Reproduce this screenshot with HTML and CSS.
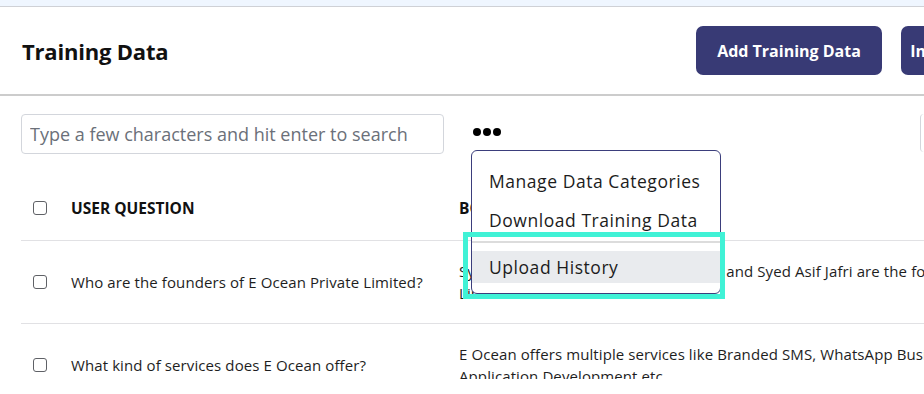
FILE: index.html
```html
<!DOCTYPE html>
<html lang="en">
<head>
  <meta charset="UTF-8" />
  <meta name="viewport" content="width=device-width, initial-scale=1.0"/>
  <title>Training Data</title>
  <link rel="stylesheet" href="styles.css">
</head>
<body>
  <div class="topbar"></div>

  <div class="header">
    <h1>Training Data</h1>
    <div class="actions">
      <button class="btn">Add Training Data</button>
      <button class="btn">Import Training Data</button>
    </div>
  </div>

  <div class="toolbar">
    <input type="text" class="search" placeholder="Type a few characters and hit enter to search">
    <div class="more">
      <span class="dots"><i></i><i></i><i></i></span>
      <div class="menu">
        <div class="menu-item">Manage Data Categories</div>
        <div class="menu-item">Download Training Data</div>
        <div class="menu-divider"></div>
        <div class="menu-item active">Upload History</div>
      </div>
      <div class="highlight"></div>
    </div>
    <div class="filter"></div>
  </div>

  <div class="table-wrap">
    <table>
      <thead>
        <tr>
          <th class="check"><span class="box"></span></th>
          <th class="question">User Question</th>
          <th class="answer">Bot Response</th>
        </tr>
      </thead>
      <tbody>
        <tr>
          <td class="check"><span class="box"></span></td>
          <td class="question">Who are the founders of E Ocean Private Limited?</td>
          <td class="answer">Syed Ali Hassan Jafri, Syed Asaad Jafri and Syed Asif Jafri are the founders of E Ocean Private Limited.</td>
        </tr>
        <tr>
          <td class="check"><span class="box"></span></td>
          <td class="question">What kind of services does E Ocean offer?</td>
          <td class="answer">E Ocean offers multiple services like Branded SMS, WhatsApp Business API, Chatbots and Application Development etc.</td>
        </tr>
      </tbody>
    </table>
  </div>
</body>
</html>
```

FILE: styles.css
```css
* {
  box-sizing: border-box;
  margin: 0;
  padding: 0;
}

body {
  font-family: 'Open Sans', sans-serif;
  color: #1a1a1a;
  background: #fff;
  width: 924px;
  height: 394px;
  overflow: hidden;
}

.topbar {
  height: 7px;
  background: #eff6ff;
  border-bottom: 1px solid #cfd1d6;
}

.header {
  height: 89px;
  padding: 0 22px;
  display: flex;
  align-items: center;
  justify-content: space-between;
  border-bottom: 2px solid #cccccc;
  white-space: nowrap;
}

h1 {
  font-size: 22px;
  font-weight: 700;
  color: #111;
  letter-spacing: -0.2px;
}

.actions {
  display: flex;
  gap: 19px;
  margin-right: -185px;
}

.btn {
  height: 49px;
  width: 186px;
  background: #383a75;
  color: #fff;
  border: none;
  border-radius: 7px;
  font-family: inherit;
  font-size: 16px;
  font-weight: 700;
}

.toolbar {
  display: flex;
  align-items: flex-start;
  padding: 18px 0 0 21px;
  height: 80px;
}

.search {
  width: 423px;
  height: 40px;
  border: 1px solid #d3d6dc;
  border-radius: 4px;
  padding: 0 8px;
  font-family: inherit;
  font-size: 18px;
}

.search::placeholder {
  color: #6b7079;
}

.more {
  position: relative;
  margin-left: 28px;
  width: 250px;
}

.dots {
  display: flex;
  gap: 2px;
  margin: 14px 0 0 1px;
}

.dots i {
  width: 8px;
  height: 8px;
  border-radius: 50%;
  background: #000;
}

.menu {
  position: absolute;
  top: 36px;
  left: -1px;
  width: 250px;
  background: #fff;
  border: 1px solid #3b3e7c;
  border-radius: 6px;
  padding: 11px 0 10px;
  z-index: 5;
}

.menu-item {
  height: 39px;
  line-height: 39px;
  padding: 0 17px;
  font-size: 17.5px;
  letter-spacing: 0.55px;
  color: #1c1c1c;
}

.menu-divider {
  height: 2px;
  background: #dcdcdc;
  margin: 1px 0 8px;
}

.menu-item.active {
  height: 32px;
  line-height: 32px;
  background: #e9ebee;
}

.highlight {
  position: absolute;
  top: 118px;
  left: -9px;
  width: 262px;
  height: 67px;
  border: 5px solid #40f2d6;
  z-index: 6;
}

.filter {
  margin-left: auto;
  width: 4px;
  height: 38px;
  border-left: 1px solid #d3d6dc;
  border-radius: 4px 0 0 4px;
}

.table-wrap {
  margin-left: 21px;
  height: 203px;
  overflow: hidden;
}

table {
  border-collapse: collapse;
  width: 1148px;
  table-layout: fixed;
}

th, td {
  text-align: left;
  vertical-align: middle;
}

th {
  height: 64px;
  font-size: 15.5px;
  font-weight: 700;
  text-transform: uppercase;
  color: #111;
  border-bottom: 1px solid #e1e1e4;
}

td {
  height: 83px;
  font-size: 15px;
  letter-spacing: 0.1px;
  color: #1e1e1e;
  border-bottom: 1px solid #e1e1e4;
}

.check {
  width: 50px;
  padding-left: 12px;
}

.question {
  width: 388px;
}

td.answer {
  line-height: 22px;
  padding: 18px 20px 18px 0;
}

.box {
  display: block;
  width: 14px;
  height: 14px;
  border: 1.5px solid #5f6166;
  border-radius: 3px;
}
```
